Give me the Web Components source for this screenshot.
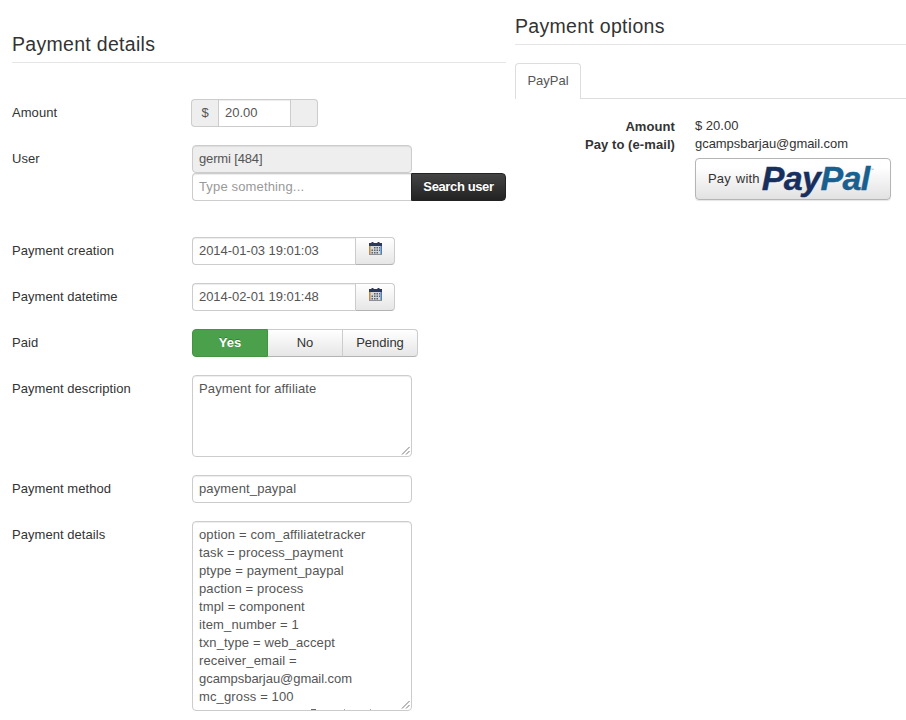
<!DOCTYPE html>
<html><head><meta charset="utf-8"><title>Payment</title>
<style>
html,body{margin:0;padding:0;background:#fff}
body{font:13px/18px "Liberation Sans",Arial,sans-serif;color:#333;height:720px;overflow:hidden}
</style></head><body>
<template id="cal"><svg width="13" height="13" viewBox="0 0 13 13"><rect x="0" y="1" width="13" height="12" fill="#d5d7da"/><rect x="0" y="1" width="1.5" height="12" fill="#c08a45"/><rect x="11.5" y="1" width="1.5" height="12" fill="#4b7fbe"/><rect x="0" y="1" width="13" height="3" fill="#2a3a5c"/><rect x="2.5" y="0" width="2" height="2" fill="#2a3a5c"/><rect x="8.5" y="0" width="2" height="2" fill="#2a3a5c"/><rect x="0" y="12" width="13" height="1" fill="#8c8f94"/><g fill="#59636f"><rect x="5" y="5" width="1.5" height="1.5"/><rect x="7.5" y="5" width="1.5" height="1.5"/><rect x="10" y="5" width="1" height="1.5"/><rect x="2.5" y="7.5" width="1.5" height="1.5"/><rect x="5" y="7.5" width="1.5" height="1.5"/><rect x="7.5" y="7.5" width="1.5" height="1.5"/><rect x="10" y="7.5" width="1" height="1.5"/><rect x="2.5" y="10" width="1.5" height="1.5"/><rect x="5" y="10" width="1.5" height="1.5"/><rect x="7.5" y="10" width="1.5" height="1.5"/></g></svg></template>
<script>
function def(name, css, html, init){
  customElements.define(name, class extends HTMLElement{
    constructor(){super();const r=this.attachShadow({mode:'open'});r.innerHTML='<style>'+css+'</style>'+html;}
    connectedCallback(){if(init)init(this);}
  });
}
const fieldCss=`box-sizing:border-box;height:28px;line-height:26px;padding:0 6px;border:1px solid #ccc;background:#fff;color:#555;white-space:nowrap;box-shadow:inset 0 1px 1px rgba(0,0,0,.075);`;
def('pay-page',`:host{display:grid;grid-template-columns:494px 391px;column-gap:9px;padding-left:12px;width:906px;box-sizing:border-box}
 ::slotted(*){min-width:0}`,`<slot></slot>`);
def('pay-heading',`:host{display:block;font-size:19.5px;letter-spacing:.3px;line-height:36px;height:36px;color:#333;border-bottom:1px solid #e5e5e5;margin-bottom:36px}`,`<slot></slot>`);
def('form-row',`:host{display:grid;grid-template-columns:180px 1fr;margin-bottom:18px}
 .l{line-height:28px;color:#333;letter-spacing:.05px}
 .c{min-width:0}`,`<div class="l"><slot name="label"></slot></div><div class="c"><slot></slot></div>`);
def('text-field',`:host{display:block;${fieldCss}width:220px;border-radius:4px;letter-spacing:.13px}
 :host([disabled]){background:#eee;letter-spacing:-.15px}`,`<slot></slot>`);
def('amount-field',`:host{display:flex;width:127px;height:28px;box-sizing:border-box;margin-left:-1px}
 .add{box-sizing:border-box;height:28px;background:#eee;border:1px solid #ccc;line-height:26px;text-align:center}
 .a{width:27px;border-radius:4px 0 0 4px;border-right:0;color:#555}
 .b{width:27px;border-radius:0 4px 4px 0;border-left:0}
 .i{${fieldCss}width:73px;border-radius:0;padding:0 6px}`,`<div class="add a">$</div><div class="i"><slot></slot></div><div class="add b"></div>`);
def('search-field',`:host{display:flex;height:28px;width:314px}
 .i{${fieldCss}width:219px;border-right:0;border-radius:4px 0 0 4px;color:#999;letter-spacing:.15px}
 .b{box-sizing:border-box;width:95px;height:28px;line-height:26px;text-align:center;color:#fff;font-weight:bold;font-size:13px;letter-spacing:-.38px;text-shadow:0 -1px 0 rgba(0,0,0,.25);background:linear-gradient(#444,#222);border:1px solid #222;border-radius:0 4px 4px 0}`,`<div class="i"><slot></slot></div><div class="b">Search user</div>`);
def('date-field',`:host{display:flex;height:28px;width:203px}
 .i{${fieldCss}width:163px;border-radius:4px 0 0 4px;border-right:0;letter-spacing:-.05px}
 .b{box-sizing:border-box;width:40px;height:28px;border:1px solid #ccc;border-bottom-color:#b3b3b3;border-radius:0 4px 4px 0;background:linear-gradient(#fff,#e6e6e6);display:flex;justify-content:center;padding-top:4px}
 svg{display:block}`,`<div class="i"><slot></slot></div><div class="b"></div>`,el=>{
   const b=el.shadowRoot.querySelector('.b');if(!b.firstChild)b.appendChild(document.getElementById('cal').content.cloneNode(true));});
def('radio-group',`:host{display:flex;height:28px;width:226px;color:#333}
 .o{box-sizing:border-box;height:28px;line-height:26px;text-align:center;border:1px solid #ccc;border-bottom-color:#b3b3b3;border-left:0;background:linear-gradient(#fff,#e6e6e6)}
 .y{width:76px;background:#4ba14b;border:1px solid #439343;color:#fff;font-weight:bold;border-radius:4px 0 0 4px;text-shadow:0 -1px 0 rgba(0,0,0,.25)}
 .n{width:75px}
 .p{width:75px;border-radius:0 4px 4px 0}`,`<div class="o y">Yes</div><div class="o n">No</div><div class="o p">Pending</div>`);
def('text-area',`:host{display:block;position:relative;box-sizing:border-box;width:220px;border:1px solid #ccc;border-radius:4px;color:#555;box-shadow:inset 0 1px 1px rgba(0,0,0,.075);overflow:hidden;background:#fff}
 .t{padding:4px 6px;white-space:pre-wrap;line-height:18px;letter-spacing:.13px}
 svg{position:absolute;right:1px;bottom:1px}
 ::slotted([slot=clip]){position:absolute;left:118px;bottom:0}`,`<div class="t"><slot></slot></div><slot name="clip"></slot><svg width="9" height="9" viewBox="0 0 9 9"><path d="M1 8.5 8.5 1M5 8.5 8.5 5" stroke="#777" fill="none"/></svg>`);
def('pay-tabs',`:host{display:flex;box-sizing:border-box;height:36px;border-bottom:1px solid #ddd;margin-bottom:18px;width:391px}
 .t{box-sizing:border-box;height:36px;width:66px;border:1px solid #ddd;border-bottom:0;border-radius:4px 4px 0 0;background:#fff;text-align:center;line-height:34px;color:#555}`,`<div class="t"><slot></slot></div>`);
def('info-row',`:host{display:grid;grid-template-columns:160px auto;column-gap:20px;justify-content:start;line-height:18px}
 .k{font-weight:bold;text-align:right;color:#333;letter-spacing:.08px;line-height:20px;height:18px}`,`<div class="k"><slot name="k"></slot></div><div><slot></slot></div>`);
def('paypal-button',`:host{display:flex;align-items:center;box-sizing:border-box;width:196px;height:42px;margin-top:5px;padding-left:12px;border:1px solid #b5b5b5;border-radius:4px;background:linear-gradient(#fff 20%,#e2e2e2);box-shadow:0 1px 1px rgba(0,0,0,.1)}
 .w{color:#333;font-size:13px;word-spacing:1px;letter-spacing:.2px;margin-right:2px}
 .l{font:italic bold 34px/36px "Liberation Sans",Arial,sans-serif;letter-spacing:-.6px;-webkit-text-stroke:.4px currentColor;margin-top:-3px}
 .a{color:#172f5e}.b{color:#17608f}
 sup{font:normal 4px/1 "Liberation Sans",sans-serif;color:#999;margin-bottom:18px}`,`<span class="w"><slot></slot></span><span class="l"><span class="a">Pay</span><span class="b">Pal</span></span><sup>™</sup>`);
</script>
<pay-page>
 <section style="padding-top:26px">
  <pay-heading>Payment details</pay-heading>
  <form-row><span slot="label">Amount</span><amount-field>20.00</amount-field></form-row>
  <form-row style="margin-bottom:36px"><span slot="label">User</span><text-field disabled>germi [484]</text-field><search-field>Type something...</search-field></form-row>
  <form-row><span slot="label">Payment creation</span><date-field>2014-01-03 19:01:03</date-field></form-row>
  <form-row><span slot="label">Payment datetime</span><date-field>2014-02-01 19:01:48</date-field></form-row>
  <form-row><span slot="label">Paid</span><radio-group></radio-group></form-row>
  <form-row><span slot="label">Payment description</span><text-area style="height:82px">Payment for affiliate</text-area></form-row>
  <form-row><span slot="label">Payment method</span><text-field>payment_paypal</text-field></form-row>
  <form-row><span slot="label">Payment details</span><text-area style="height:190px">option = com_affiliatetracker
task = process_payment
ptype = payment_paypal
paction = process
tmpl = component
item_number = 1
txn_type = web_accept
receiver_email =
<span style="letter-spacing:-.05px">gcampsbarjau@gmail.com</span>
mc_gross = 100<svg slot="clip" width="62" height="1" viewBox="0 0 62 1" style="display:block"><g fill="#666"><rect x="0" width="5" height="1"/><rect x="33" width="1" height="1" opacity=".6"/><rect x="59" width="1" height="1" opacity=".6"/></g></svg></text-area></form-row>
 </section>
 <section style="padding-top:8px">
  <pay-heading>Payment options</pay-heading>
  <div style="margin-top:-18px"><pay-tabs>PayPal</pay-tabs>
  <info-row><span slot="k">Amount</span>$ 20.00</info-row>
  <info-row><span slot="k">Pay to (e-mail)</span><span style="letter-spacing:-.05px">gcampsbarjau@gmail.com</span></info-row>
  <info-row><span slot="k"></span><paypal-button>Pay with</paypal-button></info-row></div>
 </section>
</pay-page>
</body></html>
